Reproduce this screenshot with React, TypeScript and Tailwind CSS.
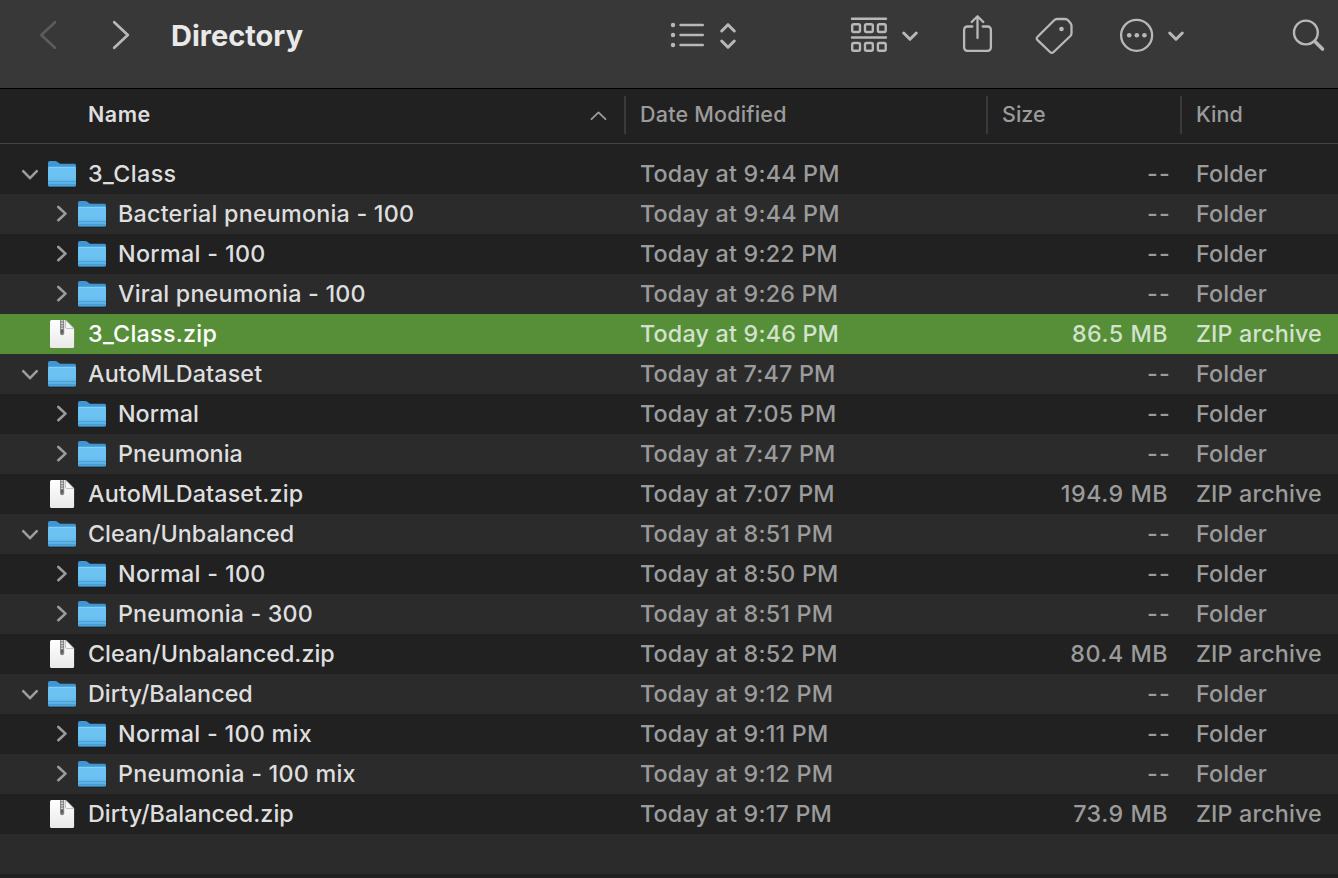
import React from 'react';

type Kind = 'open' | 'child' | 'zip';
type Row = { kind: Kind; name: string; time: string; tracking: string; size?: string; selected?: boolean };

const rows: Row[] = [
  { kind: 'open', name: '3_Class', time: '9:44', tracking: 'tracking-[0.4px]' },
  { kind: 'child', name: 'Bacterial pneumonia - 100', time: '9:44', tracking: 'tracking-[0.22px]' },
  { kind: 'child', name: 'Normal - 100', time: '9:22', tracking: 'tracking-[0.33px]' },
  { kind: 'child', name: 'Viral pneumonia - 100', time: '9:26', tracking: 'tracking-[0.2px]' },
  { kind: 'zip', name: '3_Class.zip', time: '9:46', size: '86.5 MB', selected: true, tracking: 'tracking-[0.28px]' },
  { kind: 'open', name: 'AutoMLDataset', time: '7:47', tracking: 'tracking-[0.16px]' },
  { kind: 'child', name: 'Normal', time: '7:05', tracking: 'tracking-[0px]' },
  { kind: 'child', name: 'Pneumonia', time: '7:47', tracking: 'tracking-[0.03px]' },
  { kind: 'zip', name: 'AutoMLDataset.zip', time: '7:07', size: '194.9 MB', tracking: 'tracking-[0.16px]' },
  { kind: 'open', name: 'Clean/Unbalanced', time: '8:51', tracking: 'tracking-[-0.02px]' },
  { kind: 'child', name: 'Normal - 100', time: '8:50', tracking: 'tracking-[0.33px]' },
  { kind: 'child', name: 'Pneumonia - 300', time: '8:51', tracking: 'tracking-[0.17px]' },
  { kind: 'zip', name: 'Clean/Unbalanced.zip', time: '8:52', size: '80.4 MB', tracking: 'tracking-[-0.01px]' },
  { kind: 'open', name: 'Dirty/Balanced', time: '9:12', tracking: 'tracking-[0.03px]' },
  { kind: 'child', name: 'Normal - 100 mix', time: '9:11', tracking: 'tracking-[0.28px]' },
  { kind: 'child', name: 'Pneumonia - 100 mix', time: '9:12', tracking: 'tracking-[0.24px]' },
  { kind: 'zip', name: 'Dirty/Balanced.zip', time: '9:17', size: '73.9 MB', tracking: 'tracking-[0.06px]' },
];

function Glyph({ x, w, sw = 2.4, className = '', children }: { x: number; w: number; sw?: number; className?: string; children: React.ReactNode }) {
  return (
    <svg
      width={w}
      height={88}
      viewBox={`${x} 0 ${w} 88`}
      fill="none"
      stroke="currentColor"
      strokeWidth={sw}
      strokeLinecap="round"
      strokeLinejoin="round"
      className={`shrink-0 ${className}`}
    >
      {children}
    </svg>
  );
}

function Toolbar() {
  return (
    <header className="flex h-[88px] shrink-0 bg-[#383838] text-[#b8b8b8]">
      <Glyph x={38} w={20} sw={2.6} className="ml-[38px] text-[#5c5c5c]">
        <path d="M55 22.2 41.3 35 55 47.8" />
      </Glyph>
      <Glyph x={111} w={20} sw={2.7} className="ml-[53px]">
        <path d="M114.2 22.2 127.8 35 114.2 47.8" />
      </Glyph>
      <h1 className="ml-[40px] w-[497px] pt-[18px] text-[29px] leading-[36px] font-bold tracking-[0px] text-[#e9e9e9]">Directory</h1>
      <Glyph x={668} w={38}>
        <g fill="currentColor" stroke="none">
          <circle cx="673" cy="25" r="2.2" />
          <circle cx="673" cy="35" r="2.2" />
          <circle cx="673" cy="45" r="2.2" />
        </g>
        <path d="M680.5 25h22.3M680.5 35h22.3M680.5 45h22.3" />
      </Glyph>
      <Glyph x={716} w={24} sw={3} className="ml-[10px]">
        <path d="M721.7 31 728 24.7 734.3 31M721.7 41 728 47.3 734.3 41" />
      </Glyph>
      <Glyph x={849} w={40} sw={2.4} className="ml-[109px]">
        <path d="M852 18.8h34M852 37.5h34" />
        <rect x="852.2" y="24.2" width="7.8" height="7.8" rx="1.5" />
        <rect x="865" y="24.2" width="7.8" height="7.8" rx="1.5" />
        <rect x="877.9" y="24.2" width="7.8" height="7.8" rx="1.5" />
        <rect x="852.2" y="43" width="7.8" height="7.8" rx="1.5" />
        <rect x="865" y="43" width="7.8" height="7.8" rx="1.5" />
        <rect x="877.9" y="43" width="7.8" height="7.8" rx="1.5" />
      </Glyph>
      <Glyph x={900} w={20} sw={3} className="ml-[11px]">
        <path d="M903.7 33 910 39.3 916.3 33" />
      </Glyph>
      <Glyph x={960} w={35} sw={2.3} className="ml-[40px]">
        <path d="M972.3 26.5h-5a3.2 3.2 0 0 0-3.2 3.2v17.9a3.2 3.2 0 0 0 3.2 3.2h20.4a3.2 3.2 0 0 0 3.2-3.2V29.7a3.2 3.2 0 0 0-3.2-3.2h-5M977.5 38V16.5M971.7 22l5.8-5.8 5.8 5.8" />
      </Glyph>
      <Glyph x={1034} w={41} sw={2.3} className="ml-[39px]">
        <path d="M1037.6 36.7 1054.2 20.2Q1055.3 19 1057 19h8.3q1.6 0 2.7 1.2l2.4 2.7q1.1 1.2 1.1 2.8v7.5q0 1.6-1.1 2.8L1053.6 52q-1.8 1.8-3.6 0L1037.6 40.2q-1.8-1.7 0-3.5Z" />
        <circle cx="1061.5" cy="29" r="2.3" fill="currentColor" stroke="none" />
      </Glyph>
      <Glyph x={1118} w={37} sw={2.3} className="ml-[43px]">
        <circle cx="1136.6" cy="35.3" r="15.5" />
        <g fill="currentColor" stroke="none">
          <circle cx="1129.2" cy="35.3" r="2.3" />
          <circle cx="1136.8" cy="35.3" r="2.3" />
          <circle cx="1144.4" cy="35.3" r="2.3" />
        </g>
      </Glyph>
      <Glyph x={1166} w={20} sw={3} className="ml-[11px]">
        <path d="M1169.7 33 1176 39.3 1182.3 33" />
      </Glyph>
      <Glyph x={1290} w={38} className="ml-[104px]">
        <circle cx="1305.9" cy="32.5" r="11.9" />
        <path d="M1314.7 41.3 1322.5 49" strokeWidth={3.6} />
      </Glyph>
    </header>
  );
}

function Folder() {
  return (
    <svg width="32" height="32" viewBox="0 0 32 32" className="shrink-0">
      <defs>
        <linearGradient id="front" x1="0" y1="0" x2="0" y2="1">
          <stop offset="0" stopColor="#6cc3f3" />
          <stop offset="0.55" stopColor="#6cc1f1" />
          <stop offset="1" stopColor="#52aae2" />
        </linearGradient>
      </defs>
      <path d="M2.5 29h27" stroke="#10191f" strokeOpacity="0.5" strokeWidth="1.2" />
      <path d="M2 5q0-2 1.8-2h5.4q1.2 0 2.1.8l1.6 1.3q.7.6 1.700.6h13.800q1.600 0 1.600 1.600V12H2Z" fill="#3f96d2" />
      <path d="M2 10Q2 8.800 3.400 8.800h25.200q1.400 0 1.400 1.200v17q0 1.500-1.500 1.500h-25Q2 28.500 2 27Z" fill="url(#front)" />
      <path d="M2.8 9.400h26.400" stroke="#86d3fa" strokeWidth="0.9" />
      <path d="M2 23.500h28M2 26.500h28" stroke="#4299d1" strokeWidth="0.8" />
      <path d="M3 28.200h26" stroke="#3583b8" strokeWidth="0.8" />
    </svg>
  );
}

function Archive() {
  return (
    <svg width="32" height="32" viewBox="0 0 32 32" className="shrink-0">
      <defs>
        <linearGradient id="sheet" x1="0" y1="0" x2="0" y2="1">
          <stop offset="0" stopColor="#ffffff" />
          <stop offset="1" stopColor="#e9e9e9" />
        </linearGradient>
      </defs>
      <path d="M4 3.500Q4 2 5.500 2h14l8.600 8.600v17.900q0 1.500-1.500 1.500H5.500Q4 30 4 28.500Z" fill="url(#sheet)" />
      <path d="M19.500 2v7q0 1.600 1.600 1.600h7Z" fill="#f7f7f7" stroke="#adadad" strokeWidth="0.8" />
      <path d="M14 2h4.200v13.500q0 1.800-2.100 1.800T14 15.500Z" fill="#858585" />
      <path d="M16.100 2v9" stroke="#d4d4d4" strokeWidth="2" strokeDasharray="1.3 1.3" />
      <path d="M16.100 11.800v3.500" stroke="#4d4d4d" strokeWidth="1.5" />
    </svg>
  );
}

function Disclosure({ open }: { open: boolean }) {
  return (
    <svg width="20" height="20" viewBox="0 0 20 20" fill="none" stroke="#9c9c9c" strokeWidth="2.6" strokeLinecap="round" strokeLinejoin="round" className="shrink-0">
      {open ? <path d="M3.200 7.200 10 14.200 16.800 7.200" /> : <path d="M8.300 3 15.500 9.600 8.300 16.200" />}
    </svg>
  );
}

function FileRow({ row, index }: { row: Row; index: number }) {
  const bg = row.selected ? 'bg-[#568f38]' : index % 2 ? 'bg-[#2b2b2b]' : 'bg-[#212121]';
  const meta = row.selected ? 'text-[#d3e2cc]' : 'text-[#9b9b9b]';
  return (
    <div className={`flex h-10 shrink-0 text-[23.3px] leading-[39px] font-[450] whitespace-nowrap ${bg} ${meta}`}>
      <div className={`flex w-[640px] items-center ${row.kind === 'child' ? 'pl-[50px]' : 'pl-[20px]'} ${row.selected ? 'text-white' : 'text-[#dedede]'}`}>
        {row.kind === 'zip' ? <span className="w-5" /> : <Disclosure open={row.kind === 'open'} />}
        <span className="ml-[6px] flex">{row.kind === 'zip' ? <Archive /> : <Folder />}</span>
        <span className={`ml-[10px] h-10 ${row.tracking}`}>{row.name}</span>
      </div>
      <span className="w-[362px] tracking-[0.2px]">Today at {row.time} PM</span>
      <span className={`text-right ${row.size ? 'w-[166px] tracking-[0.5px]' : 'w-[169px] tracking-[1.2px]'}`}>{row.size ?? '--'}</span>
      <span className={`${row.size ? 'ml-[28px]' : 'ml-[25px]'} tracking-[0.15px]`}>{row.kind === 'zip' ? 'ZIP archive' : 'Folder'}</span>
    </div>
  );
}

function ColumnHeader() {
  return (
    <div className="flex h-[56px] shrink-0 items-start border-t border-b border-t-black border-b-[#444444] bg-[#212121] pt-[7px] text-[21.5px] leading-[36px] font-[450] text-[#9b9b9b]">
      <span className="ml-[88px] w-[500px] font-semibold tracking-[0.5px] text-[#dedede]">Name</span>
      <svg width="20" height="38" viewBox="0 0 20 38" fill="none" stroke="#9b9b9b" strokeWidth="1.8" strokeLinecap="round" strokeLinejoin="round">
        <path d="M3.500 23.200 10.500 16.400 17.500 23.200" />
      </svg>
      <span className="ml-4 h-[38px] w-[362px] border-l-2 border-[#3a3a3a] pl-[14px] tracking-[0.2px]">Date Modified</span>
      <span className="h-[38px] w-[194px] border-l-2 border-[#3a3a3a] pl-[14px]">Size</span>
      <span className="h-[38px] border-l-2 border-[#3a3a3a] pl-[14px]">Kind</span>
    </div>
  );
}

export default function App() {
  return (
    <main className="flex h-[878px] w-[1338px] flex-col overflow-hidden bg-[#212121] font-['Inter','Liberation_Sans',sans-serif]">
      <Toolbar />
      <ColumnHeader />
      <section className="flex flex-col pt-[10px]">
        {rows.map((row, i) => (
          <FileRow key={i} row={row} index={i} />
        ))}
        <div className="h-10 shrink-0 bg-[#2b2b2b]" />
      </section>
    </main>
  );
}
